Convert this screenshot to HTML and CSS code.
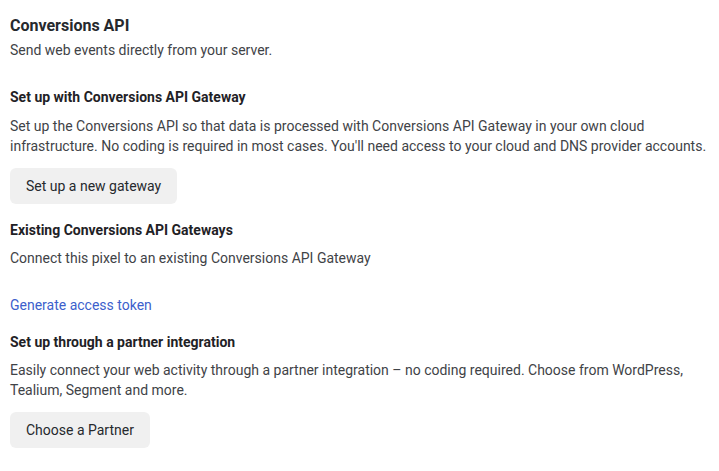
FILE: index.html
```html
<!DOCTYPE html>
<html lang="en">
<head>
<meta charset="utf-8">
<title>Conversions API</title>
<link rel="stylesheet" href="styles.css">
</head>
<body>
<main class="page">
  <header class="intro">
    <h1 class="title">Conversions API</h1>
    <p class="sub">Send web events directly from your server.</p>
  </header>

  <section class="block block-gateway">
    <h2 class="heading">Set up with Conversions API Gateway</h2>
    <p class="text">Set up the Conversions API so that data is processed with Conversions API Gateway in your own cloud infrastructure. No coding is required in most cases. You'll need access to your cloud and DNS provider accounts.</p>
    <button class="btn" type="button">Set up a new gateway</button>
  </section>

  <section class="block block-existing">
    <h2 class="heading">Existing Conversions API Gateways</h2>
    <p class="text">Connect this pixel to an existing Conversions API Gateway</p>
  </section>

  <a class="link" href="#">Generate access token</a>

  <section class="block block-partner">
    <h2 class="heading">Set up through a partner integration</h2>
    <p class="text">Easily connect your web activity through a partner integration – no coding required. Choose from WordPress, Tealium, Segment and more.</p>
    <button class="btn" type="button">Choose a Partner</button>
  </section>
</main>
</body>
</html>
```

FILE: styles.css
```css
html, body {
  margin: 0;
  padding: 0;
  background: #ffffff;
}

body {
  font-family: Roboto, "Liberation Sans", Arial, sans-serif;
  color: #3a3d41;
  font-size: 14px;
  line-height: 20px;
}

.page {
  display: flex;
  flex-direction: column;
  align-items: flex-start;
  padding: 16px 9px 16px 10px;
  width: 700px;
}

.intro {
  display: flex;
  flex-direction: column;
  gap: 4px;
}

.title {
  margin: 0;
  font-size: 16px;
  line-height: 20px;
  font-weight: 700;
  color: #26292d;
}

.sub,
.text {
  margin: 0;
  font-size: 14px;
  line-height: 20px;
  color: #3f4347;
}

.block {
  display: flex;
  flex-direction: column;
  align-items: flex-start;
}

.block-gateway {
  margin-top: 27px;
}

.block-existing {
  margin-top: 16px;
}

.block-partner {
  margin-top: 17px;
}

.heading {
  margin: 0 0 8px;
  font-size: 14px;
  line-height: 20px;
  font-weight: 700;
  color: #1f2226;
}

.block-gateway .heading {
  margin-bottom: 9px;
}

.btn {
  margin-top: 12px;
  height: 36px;
  padding: 0 16px;
  border: none;
  border-radius: 6px;
  background: #f0f0f0;
  font-family: inherit;
  font-size: 14px;
  line-height: 20px;
  color: #26292d;
  cursor: pointer;
}

.link {
  margin-top: 27px;
  font-size: 14px;
  line-height: 20px;
  color: #3d5fcc;
  text-decoration: none;
}
```
